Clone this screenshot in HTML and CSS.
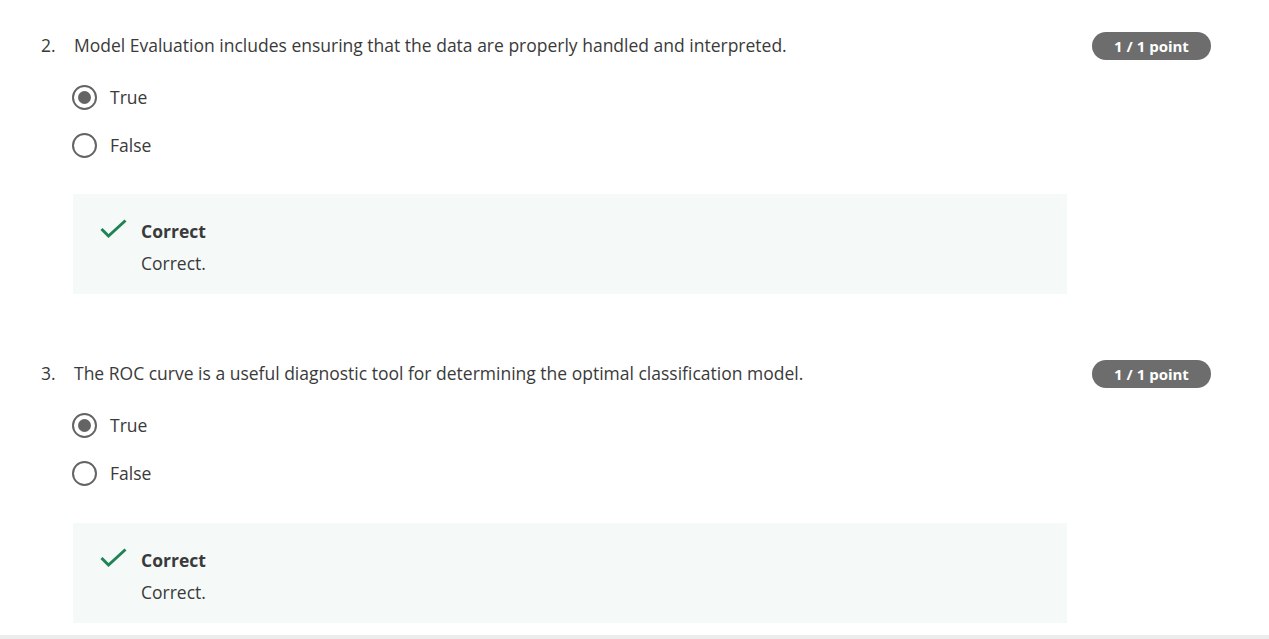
FILE: index.html
```html
<!DOCTYPE html>
<html lang="en">
<head>
<meta charset="utf-8">
<title>Quiz</title>
<link rel="stylesheet" href="styles.css">
</head>
<body>
<main class="page">
  <section class="question">
    <div class="q-num">2.</div>
    <div class="q-body">
      <div class="q-head">
        <p class="q-text">Model Evaluation includes ensuring that the data are properly handled and interpreted.</p>
        <span class="badge">1 / 1 point</span>
      </div>
      <ul class="options">
        <li class="option"><span class="radio checked"></span><span class="opt-label">True</span></li>
        <li class="option"><span class="radio"></span><span class="opt-label">False</span></li>
      </ul>
      <div class="feedback">
        <svg class="check" width="27" height="20" viewBox="0 0 27 20"><path d="M1.5 10 L8.5 17 L25.5 1.5" fill="none" stroke="#1f8354" stroke-width="3"/></svg>
        <div class="fb-text">
          <div class="fb-title">Correct</div>
          <div class="fb-msg">Correct.</div>
        </div>
      </div>
    </div>
  </section>
  <section class="question second">
    <div class="q-num">3.</div>
    <div class="q-body">
      <div class="q-head">
        <p class="q-text">The ROC curve is a useful diagnostic tool for determining the optimal classification model.</p>
        <span class="badge">1 / 1 point</span>
      </div>
      <ul class="options">
        <li class="option"><span class="radio checked"></span><span class="opt-label">True</span></li>
        <li class="option"><span class="radio"></span><span class="opt-label">False</span></li>
      </ul>
      <div class="feedback">
        <svg class="check" width="27" height="20" viewBox="0 0 27 20"><path d="M1.5 10 L8.5 17 L25.5 1.5" fill="none" stroke="#1f8354" stroke-width="3"/></svg>
        <div class="fb-text">
          <div class="fb-title">Correct</div>
          <div class="fb-msg">Correct.</div>
        </div>
      </div>
    </div>
  </section>
  <div class="divider"></div>
</main>
</body>
</html>
```
FILE: styles.css
```css
* { box-sizing: border-box; }
html, body { margin: 0; padding: 0; background: #fff; }
body {
  font-family: "Open Sans", "Noto Sans", sans-serif;
  font-size: 17.5px;
  line-height: 24px;
  color: #3a3a3a;
  overflow: hidden;
}
.page {
  padding-top: 33px;
  display: flex;
  flex-direction: column;
}
.question {
  display: flex;
  padding-left: 41px;
  padding-right: 58px;
}
.question.second { margin-top: 67px; }
.q-num { width: 33px; flex: none; }
.q-body { flex: 1; }
.q-head {
  display: flex;
  justify-content: space-between;
  align-items: flex-start;
}
.q-text { margin: 0; }
.badge {
  flex: none;
  margin-top: -1px;
  width: 119px;
  height: 28px;
  border-radius: 14px;
  background: #6d6d6d;
  color: #fff;
  font-weight: 700;
  font-size: 15px;
  line-height: 28px;
  text-align: center;
}
.options {
  list-style: none;
  margin: 13px 0 0 -2px;
  padding: 0;
}
.second .options { margin-top: 13px; }
.option {
  display: flex;
  align-items: center;
  height: 48px;
  gap: 13px;
}
.radio {
  width: 25px;
  height: 25px;
  border: 2px solid #646464;
  border-radius: 50%;
  display: flex;
  align-items: center;
  justify-content: center;
  flex: none;
}
.radio.checked::after {
  content: "";
  width: 13px;
  height: 13px;
  border-radius: 50%;
  background: #646464;
}
.feedback {
  margin-top: 25px;
  margin-left: -1px;
  width: 994px;
  height: 100px;
  background: #f5f9f8;
  display: flex;
  align-items: flex-start;
  padding: 25px 0 0 27px;
  gap: 14px;
}
.second .feedback { margin-top: 26px; }
.check { flex: none; }
.fb-title { font-weight: 700; }
.fb-msg { margin-top: 8px; }
.divider {
  margin-top: 12px;
  height: 4px;
  background: #ececec;
}
```
